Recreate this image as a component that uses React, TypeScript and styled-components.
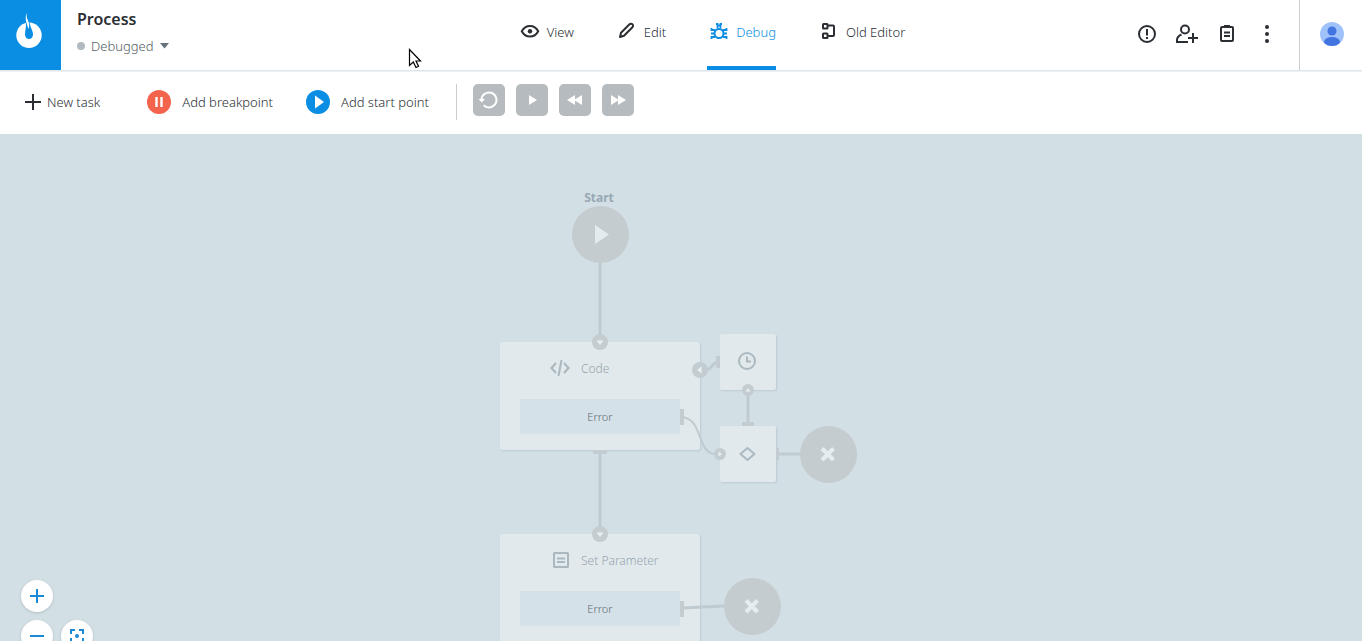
import React from 'react';
import styled, { createGlobalStyle, css } from 'styled-components';

const blue = '#0a8ee3';
const ink = '#2b2f34';
const wire = '#c0cbd1';
const port = '#c3ccd0';

const GlobalStyle = createGlobalStyle`
  *, *::before, *::after { box-sizing: border-box; }
  body {
    margin: 0;
    font-family: "Noto Sans", "Open Sans", sans-serif;
    font-size: 13px;
    line-height: 20px;
    font-weight: 300;
    color: ${ink};
    background: #fff;
  }
  button { font: inherit; color: inherit; border: 0; padding: 0; background: none; cursor: pointer; }
  a { color: inherit; text-decoration: none; }
  svg { display: block; flex: none; }
`;

const Page = styled.div`
  display: flex;
  flex-direction: column;
  height: 100vh;
  overflow: hidden;
`;

const Header = styled.header`
  display: flex;
  position: relative;
  border-bottom: 1px solid #dde6ea;
  box-shadow: 0 1px 1px #eef2f4;
`;

const LogoLink = styled.a`
  display: flex;
  align-items: center;
  justify-content: center;
  width: 61px;
  height: 70px;
  background: ${blue};
`;

const HeaderMain = styled.div`
  flex: 1;
  display: grid;
  grid-template-columns: 1fr auto 1fr;
`;

const TitleBlock = styled.div`
  padding: 9px 16px 0;
`;

const Title = styled.h1`
  margin: 0;
  font-size: 16px;
  line-height: 20px;
  font-weight: 600;
`;

const StatusButton = styled.button`
  display: flex;
  align-items: center;
  gap: 6px;
  margin-top: 7px;
  && { color: #535c64; }
`;

const StatusDot = styled.span`
  width: 8px;
  height: 8px;
  border-radius: 50%;
  background: #b0bac0;
`;

const Tabs = styled.nav`
  display: flex;
  gap: 41px;
`;

const Tab = styled.a<{ $active?: boolean }>`
  display: flex;
  align-items: flex-start;
  gap: 5px;
  padding-top: 20px;
  border-bottom: 4px solid ${p => (p.$active ? blue : 'transparent')};
  color: ${p => (p.$active ? blue : ink)};
  span { line-height: 24px; }
`;

const Actions = styled.div`
  display: flex;
  justify-content: flex-end;
`;

const ActionList = styled.div`
  display: flex;
  align-items: center;
  gap: 16px;
  padding: 0 20px 2px 0;
  border-right: 1px solid #c9cdd0;
`;

const IconButton = styled.button`
  display: flex;
`;

const AvatarButton = styled.button`
  display: flex;
  align-items: center;
  justify-content: center;
  width: 62px;
  && { padding: 0 0 2px 2px; }
`;

const Cursor = styled.svg`
  position: absolute;
  left: 408px;
  top: 48px;
  pointer-events: none;
`;

const Toolbar = styled.div`
  display: flex;
  align-items: flex-start;
  padding: 13px 24px 14px;
`;

const ToolButton = styled.button<{ $gap: number; $after: number }>`
  display: flex;
  align-items: center;
  gap: ${p => p.$gap}px;
  height: 36px;
  margin-right: ${p => p.$after}px;
  white-space: nowrap;
`;

const ToolDivider = styled.span`
  width: 1px;
  height: 36px;
  margin-right: 16px;
  background: #c9cdd0;
`;

const Playback = styled.div`
  display: flex;
  gap: 11px;
`;

const PlayButton = styled.button`
  width: 32px;
  height: 32px;
  border-radius: 5px;
  && { color: #fff; background: #b5bbbe; }
`;

const Canvas = styled.main`
  flex: 1;
  position: relative;
  overflow: hidden;
  background: #d2dfe5;
`;

const placed = css<{ $x: number; $y: number }>`
  position: absolute;
  left: ${p => p.$x}px;
  top: ${p => p.$y}px;
`;

const NodeLabel = styled.div<{ $x: number; $y: number }>`
  ${placed}
  width: 58px;
  text-align: center;
  font-size: 12px;
  line-height: 16px;
  font-weight: 700;
  color: #98a8b3;
`;

const RoundNode = styled.div<{ $x: number; $y: number }>`
  ${placed}
  display: flex;
  align-items: center;
  justify-content: center;
  width: 57px;
  height: 57px;
  border-radius: 50%;
  background: #c5ccd0;
`;

const SquareNode = styled.div<{ $x: number; $y: number }>`
  ${placed}
  display: flex;
  align-items: center;
  justify-content: center;
  width: 56px;
  height: 56px;
  border-radius: 2px;
  color: #abb9c1;
  background: #e1e9ed;
  box-shadow: 1px 1px 2px #bccad1;
`;

const TaskNode = styled.section<{ $x: number; $y: number }>`
  ${placed}
  width: 200px;
  height: 108px;
  padding: 15px 20px 0;
  border-radius: 2px;
  background: #e1e9ed;
  box-shadow: 1px 1px 2px #bccad1;
`;

const TaskHeading = styled.div`
  display: flex;
  align-items: center;
  gap: 8px;
  height: 24px;
  padding-left: 29px;
  font-size: 12px;
  white-space: nowrap;
  color: #96a5ae;
  svg { color: #abb7be; }
`;

const TaskError = styled.div`
  margin-top: 18px;
  height: 35px;
  line-height: 35px;
  font-size: 11px;
  text-align: center;
  color: #5f6b73;
  background: #d5e1e8;
`;

const Wires = styled.svg`
  position: absolute;
  left: 0;
  top: 0;
  pointer-events: none;
`;

const ZoomControls = styled.div`
  position: absolute;
  left: 21px;
  bottom: -11px;
  display: grid;
  grid-template-columns: 32px 32px;
  gap: 8px;
`;

const ZoomButton = styled.button`
  display: flex;
  align-items: center;
  justify-content: center;
  width: 32px;
  height: 32px;
  border-radius: 50%;
  box-shadow: 0 1px 3px #b3c0c7;
  && { color: #1c8ad6; background: #fff; }
  &:first-child { grid-column: 1 / -1; }
`;

const Icon = ({ size = 24, width = 2, children }: { size?: number; width?: number; children: React.ReactNode }) => (
  <svg width={size} height={size} viewBox={`0 0 ${size} ${size}`} fill="none" stroke="currentColor" strokeWidth={width} aria-hidden="true">
    {children}
  </svg>
);

const Logo = () => (
  <svg width="30" height="44" viewBox="0 0 30 44" aria-hidden="true">
    <circle cx="13" cy="22.300" r="12.700" fill="#fff" />
    <path d="M9.800 9.500C10.500 14 9 17 9 21.500a4 4.500 0 0 0 8 0C17 18 14.500 15 13.500 9.500Z" fill={blue} />
    <path d="M11 0C8.500 5 10.300 8.500 11 11.500C11.500 13.500 12 14.500 12.500 16C13.800 13 13 10 11.800 7C10.800 5 10.500 3 11 0Z" fill="#fff" />
  </svg>
);

const icons = {
  view: (
    <>
      <path d="M3.800 11.200C5.500 8 8.600 6 12 6s6.500 2 8.200 5.200C18.500 14.500 15.400 16.500 12 16.500S5.500 14.500 3.800 11.200Z" />
      <circle cx="12" cy="11.200" r="2.200" fill="currentColor" stroke="none" />
    </>
  ),
  edit: <path d="M5 17L6 12.800L14.500 4.300a2 2 0 0 1 2.900 0a2 2 0 0 1 0 2.900L9 15.700Z" strokeLinejoin="round" />,
  debug: (
    <>
      <circle cx="12" cy="13.500" r="4.500" />
      <path d="M9 4h1.500v4.500M15 4h-1.500v4.500M10 5.500h4M4.500 8v2H8M19.500 8v2H16M4 13.500h3.500M16.500 13.500H20M4.500 19v-2H8M19.500 19v-2H16" strokeWidth="1.800" />
    </>
  ),
  old: (
    <>
      <rect x="6" y="4" width="4.500" height="4.500" rx="0.500" />
      <rect x="6" y="13.500" width="4.500" height="4.500" rx="0.500" />
      <path d="M11 5.500h5a1 1 0 0 1 1 1v8.500a1 1 0 0 1 -1 1h-5" />
    </>
  ),
};

const tabs = [
  { key: 'view', label: 'View' },
  { key: 'edit', label: 'Edit' },
  { key: 'debug', label: 'Debug' },
  { key: 'old', label: 'Old Editor' },
] as const;

const Port = ({ x, y, r, turn = 0 }: { x: number; y: number; r: number; turn?: number }) => (
  <g transform={`translate(${x} ${y}) rotate(${turn})`}>
    <circle r={r} fill={port} />
    <path d={r > 6 ? 'M-3.500 -1.500h7L0 3Z' : 'M-2.500 -1.500h5L0 2Z'} fill="#e8eff2" />
  </g>
);

const Cross = () => (
  <Icon size={20} width={4}>
    <path d="M3 3.500l11.500 11.500M14.500 3.500L3 15" stroke="#e6edf0" />
  </Icon>
);

export default function App() {
  return (
    <Page>
      <GlobalStyle />
      <Header>
        <LogoLink href="#" aria-label="Home"><Logo /></LogoLink>
        <HeaderMain>
          <TitleBlock>
            <Title>Process</Title>
            <StatusButton>
              <StatusDot />
              Debugged
              <svg width="10" height="6" viewBox="0 0 10 6" aria-hidden="true"><path d="M0 0h9L4.500 5.500Z" fill="#65727a" /></svg>
            </StatusButton>
          </TitleBlock>
          <Tabs>
            {tabs.map(t => (
              <Tab key={t.key} href="#" $active={t.key === 'debug'}>
                <Icon>{icons[t.key]}</Icon>
                <span>{t.label}</span>
              </Tab>
            ))}
          </Tabs>
          <Actions>
            <ActionList>
              <IconButton aria-label="Alerts">
                <Icon><circle cx="12" cy="12" r="8" /><path d="M12 7v6.500M12 15v2" /></Icon>
              </IconButton>
              <IconButton aria-label="Add user">
                <Icon>
                  <circle cx="10" cy="7.500" r="4" />
                  <path d="M13 20H2v-2c0-3 2-4.500 4.500-5.500M18 11v10M13 16h10" />
                </Icon>
              </IconButton>
              <IconButton aria-label="Tasks">
                <Icon>
                  <rect x="6" y="5" width="12" height="14" rx="1" />
                  <path d="M9 4h6M9 10.500h6M9 14h6" />
                </Icon>
              </IconButton>
              <IconButton aria-label="More">
                <Icon>
                  <g fill="currentColor" stroke="none">
                    <circle cx="12" cy="5" r="2" /><circle cx="12" cy="12" r="2" /><circle cx="12" cy="19" r="2" />
                  </g>
                </Icon>
              </IconButton>
            </ActionList>
            <AvatarButton aria-label="Account">
              <svg width="24" height="24" viewBox="0 0 24 24" aria-hidden="true">
                <clipPath id="avatar"><circle cx="12" cy="12" r="12" /></clipPath>
                <g clipPath="url(#avatar)">
                  <rect width="24" height="24" fill="#a0c2fa" />
                  <circle cx="12" cy="9" r="4.500" fill="#4275df" />
                  <ellipse cx="12" cy="20" rx="8" ry="5" fill="#4275df" />
                </g>
              </svg>
            </AvatarButton>
          </Actions>
        </HeaderMain>
        <Cursor width="15" height="22" viewBox="0 0 15 22" aria-hidden="true">
          <path d="M1.500 1.500v16l3.800-3.500l2.700 5.500l2.500-1.200l-2.500-5.300h4.500Z" fill="#fff" stroke="#000" strokeWidth="1.200" />
        </Cursor>
      </Header>

      <Toolbar>
        <ToolButton $gap={5} $after={47}>
          <Icon size={18}><path d="M9 1v16M1 9h16" /></Icon>
          New task
        </ToolButton>
        <ToolButton $gap={11} $after={33}>
          <svg width="24" height="24" viewBox="0 0 24 24" aria-hidden="true">
            <circle cx="12" cy="12" r="12" fill="#f4644c" /><path d="M9.500 7v10M14.500 7v10" stroke="#fff" strokeWidth="2.400" />
          </svg>
          Add breakpoint
        </ToolButton>
        <ToolButton $gap={11} $after={27}>
          <svg width="24" height="24" viewBox="0 0 24 24" aria-hidden="true">
            <circle cx="12" cy="12" r="12" fill={blue} /><path d="M9 5.500v13L18 12Z" fill="#fff" />
          </svg>
          Add start point
        </ToolButton>
        <ToolDivider />
        <Playback>
          <PlayButton aria-label="Restart">
            <Icon size={32}>
              <path d="M8.500 15.500a7.500 7.500 0 1 1 2.200 5.800" />
              <path d="M5.500 15h6.500L8.800 18.500Z" fill="currentColor" stroke="none" />
            </Icon>
          </PlayButton>
          <PlayButton aria-label="Play"><Icon size={32}><path d="M13 11v10l8-5Z" fill="#fff" stroke="none" /></Icon></PlayButton>
          <PlayButton aria-label="Step back"><Icon size={32}><path d="M16 11v10l-8-5ZM23 11v10l-8-5Z" fill="#fff" stroke="none" /></Icon></PlayButton>
          <PlayButton aria-label="Step forward"><Icon size={32}><path d="M9 11v10l8-5ZM16 11v10l8-5Z" fill="#fff" stroke="none" /></Icon></PlayButton>
        </Playback>
      </Toolbar>

      <Canvas>
        <NodeLabel $x={570} $y={56}>Start</NodeLabel>
        <RoundNode $x={572} $y={72}>
          <svg width="20" height="20" viewBox="0 0 20 20" aria-hidden="true"><path d="M4 0v19L18 9.500Z" fill="#e4ebee" /></svg>
        </RoundNode>
        <TaskNode $x={500} $y={208}>
          <TaskHeading>
            <Icon><path d="M7 6L2.500 11L7 16M15 6L19.500 11L15 16M12.500 3l-3 16" /></Icon>
            Code
          </TaskHeading>
          <TaskError>Error</TaskError>
        </TaskNode>
        <TaskNode $x={500} $y={400}>
          <TaskHeading>
            <Icon><rect x="5" y="4" width="14" height="14" rx="0.500" /><path d="M8 9.500h8M8 13h8" /></Icon>
            Set Parameter
          </TaskHeading>
          <TaskError>Error</TaskError>
        </TaskNode>
        <SquareNode $x={720} $y={200}>
          <Icon><circle cx="11" cy="11" r="8" /><path d="M11 6.500v5h4" /></Icon>
        </SquareNode>
        <SquareNode $x={720} $y={292}>
          <Icon><path d="M11.500 6l7 6l-7 6l-7-6Z" strokeLinejoin="round" /></Icon>
        </SquareNode>
        <Wires width="900" height="507" viewBox="0 0 900 507" aria-hidden="true">
          <g stroke={wire} strokeWidth="3" fill="none">
            <path d="M600 129v79M600 318v82M748 258v32M778 320h24M682 474L724 472" />
            <path d="M682 283C704 285 696 320 716 320" strokeWidth="2" />
            <path d="M702 236C712 238 712 228 718 228" />
          </g>
          <path d="M593 316h14v4h-14ZM742 288h12v4h-12ZM680 275h4v16h-4ZM716 222h4v12h-4ZM776 314h3v12h-3ZM680 467h4v16h-4Z" fill={port} />
          <Port x={600} y={208} r={8} />
          <Port x={600} y={400} r={8} />
          <Port x={700} y={236} r={8} turn={90} />
          <Port x={748} y={256} r={6} turn={180} />
          <Port x={720} y={320} r={6} turn={-90} />
        </Wires>
        <RoundNode $x={800} $y={292}><Cross /></RoundNode>
        <RoundNode $x={724} $y={444}><Cross /></RoundNode>
        <ZoomControls>
          <ZoomButton aria-label="Zoom in"><Icon size={16}><path d="M8 1v14M1 8h14" /></Icon></ZoomButton>
          <ZoomButton aria-label="Zoom out"><Icon size={16}><path d="M1 8h14" /></Icon></ZoomButton>
          <ZoomButton aria-label="Fit to screen">
            <Icon size={16}><path d="M2 6V2h4M10 2h4v4M14 10v4h-4M6 14H2v-4" /><circle cx="8" cy="8" r="2" fill="currentColor" stroke="none" /></Icon>
          </ZoomButton>
        </ZoomControls>
      </Canvas>
    </Page>
  );
}
